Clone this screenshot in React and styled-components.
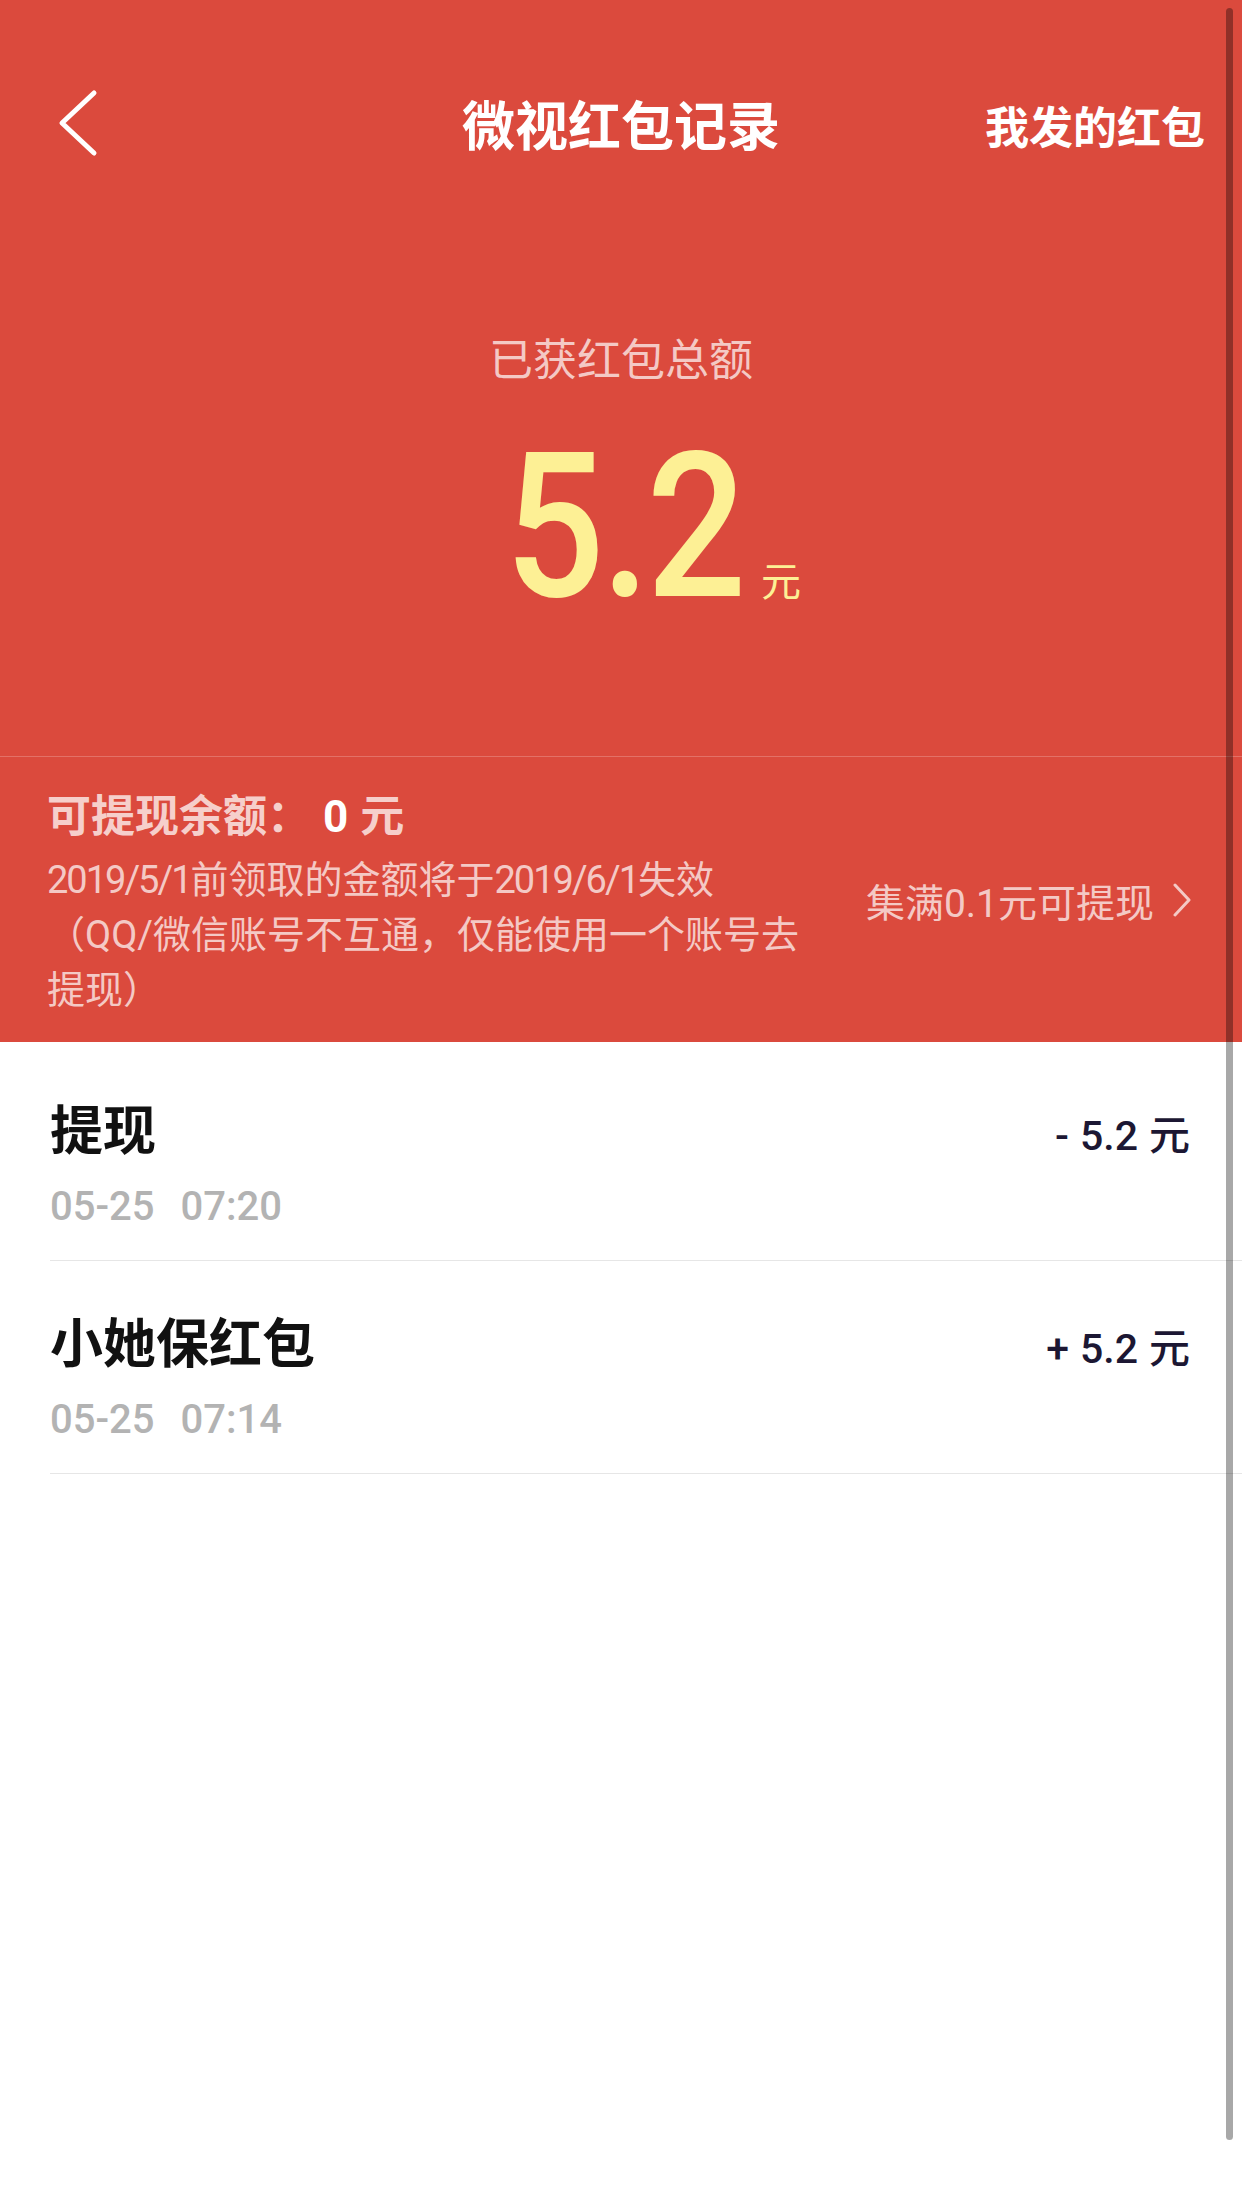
import styled, { createGlobalStyle } from 'styled-components';

const GlobalStyle = createGlobalStyle`
  * { box-sizing: border-box; }
  body {
    margin: 0;
    background: #fff;
    font-family: "Roboto", "Noto Sans CJK SC", sans-serif;
  }
`

const Page = styled.div`
  position: relative;
  width: 1242px;
  min-height: 2208px;
  background: #fff;
`

const RedTop = styled.div`
  background: #db4a3d;
`

const NavBar = styled.div`
  display: grid;
  grid-template-columns: 1fr auto 1fr;
  align-items: center;
  height: 246px;
  padding: 0 37px;
`

const BackButton = styled.div`
  display: flex;
  margin-left: 21px;
  justify-self: start;
`

const Title = styled.div`
  color: #fff;
  font-size: 53px;
  font-weight: 700;
`

const NavLink = styled.div`
  justify-self: end;
  color: #fff;
  font-size: 44px;
  font-weight: 700;
  margin-top: 4px;
`

const Summary = styled.div`
  height: 510px;
  padding-top: 85px;
  display: flex;
  flex-direction: column;
  align-items: center;
`

const SummaryLabel = styled.div`
  font-size: 44px;
  line-height: 60px;
  color: #f4c9c5;
`

const AmountRow = styled.div`
  width: 100%;
  margin-top: 36px;
  display: grid;
  grid-template-columns: 1fr auto 1fr;
  align-items: baseline;
`

/* digits in the app are a condensed face, squeeze roboto to match */
const BigNumber = styled.div`
  grid-column: 2;
  font-family: "Roboto", sans-serif;
  font-size: 202px;
  line-height: 200px;
  font-weight: 500;
  letter-spacing: -4px;
  transform: scaleX(0.87);
  margin-right: -6px;
  color: #fdf095;
`

const BigUnit = styled.div`
  justify-self: start;
  margin-left: 6px;
  font-size: 40px;
  color: #fdf095;
`

const Balance = styled.div`
  height: 286px;
  border-top: 1px solid rgba(255, 255, 255, 0.22);
  display: flex;
  align-items: center;
  padding: 0 50px 0 47px;
`

const BalanceInfo = styled.div`
  width: 770px;
  padding-top: 8px;
`

const BalanceTitle = styled.div`
  font-size: 44px;
  line-height: 56px;
  font-weight: 700;
  color: #f6cfcb;
  display: flex;
  align-items: baseline;
`

const BalanceValue = styled.span`
  color: ${p => (p.$strong ? '#fff' : '#f6cfcb')};
  margin-left: ${p => p.$gap}px;
`

const Notice = styled.div`
  margin-top: 8px;
  font-size: 38px;
  line-height: 55px;
  color: #f4c9c5;
`

const Digits = styled.span`
  letter-spacing: -2px;
`

const WithdrawLink = styled.div`
  margin-left: auto;
  display: flex;
  align-items: center;
  gap: 18px;
  font-size: 39px;
  color: #f4c9c5;
`

const List = styled.div`
  padding-top: 6px;
`

const Row = styled.div`
  margin-left: 50px;
  padding: 54px 52px 29px 0;
  border-bottom: 1px solid #e6e6e6;
`

const RowTop = styled.div`
  display: flex;
  justify-content: space-between;
  align-items: center;
`

const RowTitle = styled.div`
  font-size: 53px;
  line-height: 60px;
  font-weight: 700;
  color: #111;
`

const RowAmount = styled.div`
  font-size: 41px;
  font-weight: 500;
  color: #1c1733;
  display: flex;
  gap: 11px;
  align-items: baseline;
`

const RowDate = styled.div`
  margin-top: 21px;
  display: flex;
  gap: 26px;
  font-size: 40px;
  line-height: 48px;
  font-weight: 500;
  color: #b3b3b3;
`

const ScrollThumb = styled.div`
  position: absolute;
  top: 8px;
  right: 9px;
  width: 7px;
  height: 2132px;
  border-radius: 4px;
  background: rgba(0, 0, 0, 0.34);
`

const records = [
  { title: '提现', sign: '-', amount: '5.2', day: '05-25', time: '07:20' },
  { title: '小她保红包', sign: '+', amount: '5.2', day: '05-25', time: '07:14' },
]

export default function App() {
  return (
    <Page>
      <GlobalStyle />
      <RedTop>
        <NavBar>
          <BackButton>
            <svg width="40" height="68" viewBox="0 0 40 68">
              <polyline points="36,4 4,34 36,64" fill="none" stroke="#fff" strokeWidth="5" strokeLinecap="round" strokeLinejoin="round" />
            </svg>
          </BackButton>
          <Title>微视红包记录</Title>
          <NavLink>我发的红包</NavLink>
        </NavBar>
        <Summary>
          <SummaryLabel>已获红包总额</SummaryLabel>
          <AmountRow>
            <BigNumber>5.2</BigNumber>
            <BigUnit>元</BigUnit>
          </AmountRow>
        </Summary>
        <Balance>
          <BalanceInfo>
            <BalanceTitle>
              可提现余额：
              <BalanceValue $strong $gap={12}>0</BalanceValue>
              <BalanceValue $gap={12}>元</BalanceValue>
            </BalanceTitle>
            <Notice>
              <div>
                <Digits>2019/5/1</Digits>前领取的金额将于<Digits>2019/6/1</Digits>失效
              </div>
              <div>（QQ/微信账号不互通，仅能使用一个账号去提现）</div>
            </Notice>
          </BalanceInfo>
          <WithdrawLink>
            集满0.1元可提现
            <svg width="20" height="34" viewBox="0 0 20 34">
              <polyline points="3,2 17,17 3,32" fill="none" stroke="#f4c9c5" strokeWidth="3" strokeLinecap="round" strokeLinejoin="round" />
            </svg>
          </WithdrawLink>
        </Balance>
      </RedTop>
      <List>
        {records.map(r => (
          <Row key={r.time}>
            <RowTop>
              <RowTitle>{r.title}</RowTitle>
              <RowAmount>
                <span>{r.sign}</span>
                <span>{r.amount}</span>
                <span>元</span>
              </RowAmount>
            </RowTop>
            <RowDate>
              <span>{r.day}</span>
              <span>{r.time}</span>
            </RowDate>
          </Row>
        ))}
      </List>
      <ScrollThumb />
    </Page>
  )
}
